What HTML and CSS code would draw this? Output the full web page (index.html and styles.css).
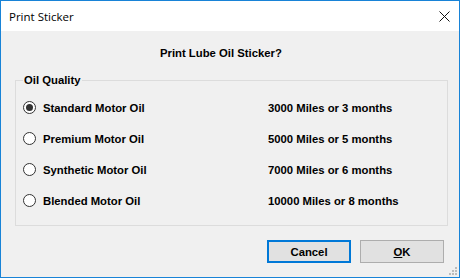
FILE: index.html
```html
<!DOCTYPE html>
<html>
<head>
<meta charset="utf-8">
<link rel="stylesheet" href="styles.css">
</head>
<body>
<div class="window">
  <div class="titlebar">
    <span class="title">Print Sticker</span>
    <span class="close">
      <svg width="11" height="11" viewBox="0 0 11 11"><path d="M0.5 0.5 L10.5 10.5 M10.5 0.5 L0.5 10.5" stroke="#111" stroke-width="1" fill="none"/></svg>
    </span>
  </div>
  <div class="heading">Print Lube Oil Sticker?</div>
  <div class="group">
    <span class="legend">Oil Quality</span>
    <div class="rows">
      <div class="opt"><span class="radio checked"></span><span>Standard Motor Oil</span></div>
      <div class="interval">3000 Miles or 3 months</div>
      <div class="opt"><span class="radio"></span><span>Premium Motor Oil</span></div>
      <div class="interval">5000 Miles or 5 months</div>
      <div class="opt"><span class="radio"></span><span>Synthetic Motor Oil</span></div>
      <div class="interval">7000 Miles or 6 months</div>
      <div class="opt"><span class="radio"></span><span>Blended Motor Oil</span></div>
      <div class="interval">10000 Miles or 8 months</div>
    </div>
  </div>
  <div class="buttons">
    <button class="btn default">Cancel</button>
    <button class="btn"><u>O</u>K</button>
  </div>
  <svg class="grip" width="10" height="10" viewBox="0 0 10 10">
    <rect x="7" y="1" width="2" height="2" fill="#bcbcbc"/>
    <rect x="4" y="4" width="2" height="2" fill="#bcbcbc"/>
    <rect x="7" y="4" width="2" height="2" fill="#bcbcbc"/>
    <rect x="1" y="7" width="2" height="2" fill="#bcbcbc"/>
    <rect x="4" y="7" width="2" height="2" fill="#bcbcbc"/>
    <rect x="7" y="7" width="2" height="2" fill="#bcbcbc"/>
  </svg>
</div>
</body>
</html>
```
FILE: styles.css
```css
html, body {
  margin: 0;
  padding: 0;
  background: #f0f0f0;
}
.window {
  width: 460px;
  height: 278px;
  box-sizing: border-box;
  border: 1px solid #1883d7;
  background: #f0f0f0;
  display: flex;
  flex-direction: column;
  position: relative;
  font-family: "Liberation Sans", Arial, sans-serif;
  font-size: 11.3px;
  font-weight: bold;
  color: #000;
}
.titlebar {
  height: 30px;
  background: #fff;
  display: flex;
  align-items: center;
  justify-content: space-between;
  padding-left: 8px;
  padding-right: 9px;
  flex-shrink: 0;
}
.title {
  font-family: "Open Sans", "Noto Sans", sans-serif;
  font-weight: normal;
  font-size: 11.5px;
  color: #000;
}
.close {
  display: flex;
  align-items: center;
  height: 11px;
}
.heading {
  margin-top: 16px;
  line-height: 13px;
  padding-left: 159px;
}
.group {
  position: relative;
  margin: 20px 11px 0 14px;
  border: 1px solid #dcdcdc;
  padding: 11px 0 9px 7px;
}
.legend {
  position: absolute;
  top: -7px;
  left: 7px;
  padding: 0 1px;
  line-height: 13px;
  background: #f0f0f0;
}
.rows {
  display: grid;
  grid-template-columns: 245px 1fr;
  grid-auto-rows: 31px;
  align-items: center;
}
.opt {
  display: flex;
  align-items: center;
  gap: 7px;
}
.radio {
  width: 13px;
  height: 13px;
  box-sizing: border-box;
  border: 1px solid #333;
  border-radius: 50%;
  background: #fff;
  display: flex;
  align-items: center;
  justify-content: center;
}
.radio.checked::after {
  content: "";
  width: 7px;
  height: 7px;
  border-radius: 50%;
  background: #333;
}
.buttons {
  margin-top: 14px;
  display: flex;
  justify-content: flex-end;
  gap: 9px;
  padding-right: 15px;
}
.btn {
  width: 84px;
  height: 23px;
  box-sizing: border-box;
  background: #e1e1e1;
  border: 1px solid #adadad;
  font-family: "Liberation Sans", Arial, sans-serif;
  font-size: 11.3px;
  font-weight: bold;
  color: #000;
  padding: 0;
}
.btn.default {
  border: 2px solid #0078d7;
}
.grip {
  position: absolute;
  right: 1px;
  bottom: 1px;
}
```
